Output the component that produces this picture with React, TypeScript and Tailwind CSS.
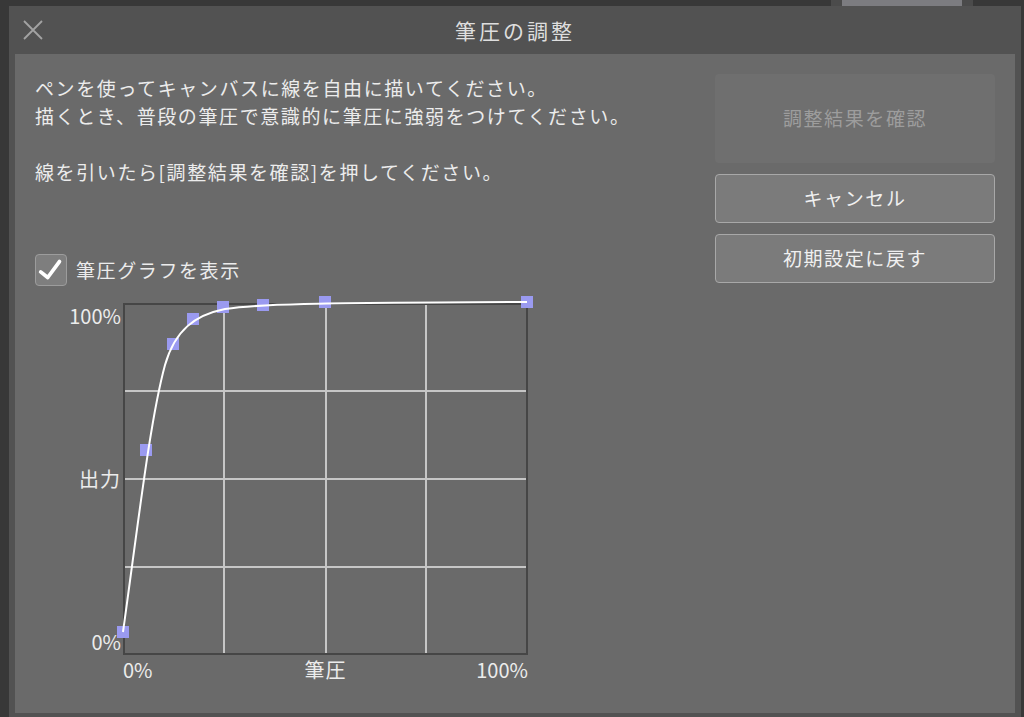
const FONT = { fontFamily: '"Noto Sans CJK JP", "Noto Sans", sans-serif' };

const POINTS: [number, number][] = [
  [0, 329],
  [23, 147],
  [50, 41],
  [70, 16],
  [100, 4],
  [140, 2],
  [202, -1],
  [404, -1],
];

function CloseIcon() {
  return (
    <svg width="20" height="20" viewBox="0 0 20 20" className="block">
      <path d="M1 1 L19 19 M19 1 L1 19" stroke="#a3a3a3" strokeWidth="1.8" fill="none" />
    </svg>
  );
}

function PressureGraph() {
  return (
    <svg width="405" height="352" viewBox="0 0 405 352" className="block overflow-visible">
      <rect x="0" y="0" width="405" height="352" fill="#6a6a6a" />
      {[101, 203, 303].map((x) => (
        <line key={x} x1={x} y1="0" x2={x} y2="352" stroke="#c6c6c6" strokeWidth="2" />
      ))}
      {[88, 176, 264].map((y) => (
        <line key={y} x1="0" y1={y} x2="405" y2={y} stroke="#c6c6c6" strokeWidth="2" />
      ))}
      <rect x="1" y="1" width="403" height="350" fill="none" stroke="#464646" strokeWidth="2" />
      {POINTS.map(([x, y]) => (
        <rect key={`${x}-${y}`} x={x - 6} y={y - 6} width="12" height="12" fill="#9a9af0" />
      ))}
      <path
        d="M0 329 C15 222 27 117 42 62 C52 27 72 12 102 6 C137 1 177 0 404 -1"
        fill="none"
        stroke="#ffffff"
        strokeWidth="2"
      />
    </svg>
  );
}

export default function App() {
  return (
    <div className="w-[1024px] h-[717px] bg-[#383838] overflow-hidden flex flex-col" style={FONT}>
      <div className="h-[6px] shrink-0 flex">
        <div className="ml-[831px] w-[142px] h-full bg-[#4b4b4b] px-[11px]">
          <div className="h-full bg-[#7c7c80]" />
        </div>
      </div>

      <div className="ml-[9px] w-[1012px] flex-1 bg-[#525252] flex flex-col">
        <div className="h-[48px] shrink-0 relative flex items-center justify-center">
          <button className="absolute left-[14px] top-[14px]">
            <CloseIcon />
          </button>
          <span className="text-[21px] tracking-[3px] text-[#dedede] leading-none">筆圧の調整</span>
        </div>

        <div className="mx-[6px] mb-[4px] flex-1 bg-[#6a6a6a] flex justify-between">
          <div className="pl-[20px] pt-[20px] flex flex-col">
            <div className="text-[19px] leading-[28px] tracking-[1.6px] text-[#ececec]">
              <p>ペンを使ってキャンバスに線を自由に描いてください。</p>
              <p>描くとき、普段の筆圧で意識的に筆圧に強弱をつけてください。</p>
              <p>&nbsp;</p>
              <p>線を引いたら[調整結果を確認]を押してください。</p>
            </div>

            <label className="mt-[68px] flex items-center gap-[9px]">
              <span className="w-[32px] h-[32px] rounded-[4px] bg-[#7e7e7e] border border-[#9c9c9c] flex items-center justify-center">
                <svg width="32" height="32" viewBox="0 0 32 32" className="block">
                  <path d="M5 18 L12.5 24 L25 7" fill="none" stroke="#ffffff" strokeWidth="4" strokeLinecap="round" strokeLinejoin="round" />
                </svg>
              </span>
              <span className="text-[19px] tracking-[1.6px] text-[#ececec]">筆圧グラフを表示</span>
            </label>

            <div className="mt-[17px] flex">
              <div className="w-[88px] h-[352px] pr-[2px] flex flex-col justify-between items-end text-[20px] leading-[26px] text-[#ececec]">
                <span>100%</span>
                <span className="tracking-[1px]">出力</span>
                <span>0%</span>
              </div>
              <div className="flex flex-col">
                <PressureGraph />
                <div className="grid grid-cols-3 w-[405px] text-[20px] leading-[26px] mt-[2px] text-[#ececec]">
                  <span className="text-left">0%</span>
                  <span className="text-center tracking-[1px]">筆圧</span>
                  <span className="text-right">100%</span>
                </div>
              </div>
            </div>
          </div>

          <div className="w-[280px] mr-[20px] pt-[20px] flex flex-col gap-[11px]">
            <button className="h-[89px] rounded-[4px] bg-[#6f6f6f] text-[19px] tracking-[1.6px] text-[#9d9d9d]">
              調整結果を確認
            </button>
            <button className="h-[49px] rounded-[4px] bg-[#7b7b7b] border border-[#a8a8a8] text-[19px] tracking-[1.6px] text-[#f0f0f0]">
              キャンセル
            </button>
            <button className="h-[49px] rounded-[4px] bg-[#7b7b7b] border border-[#a8a8a8] text-[19px] tracking-[1.6px] text-[#f0f0f0]">
              初期設定に戻す
            </button>
          </div>
        </div>
      </div>
    </div>
  );
}
